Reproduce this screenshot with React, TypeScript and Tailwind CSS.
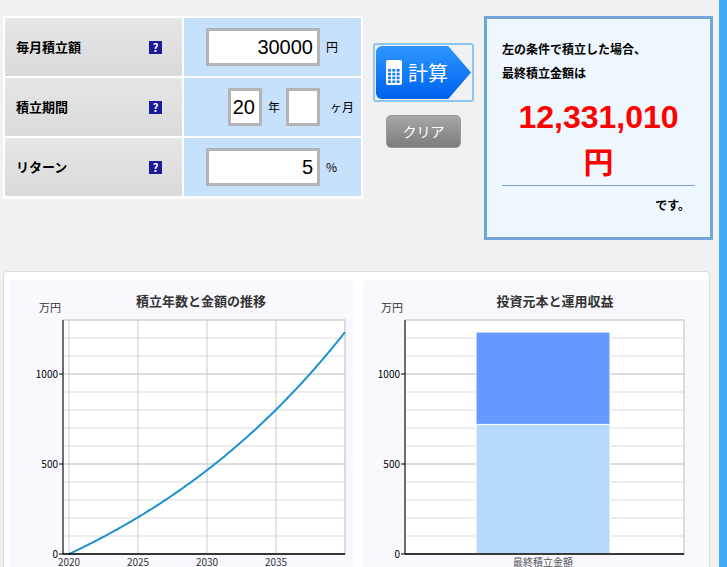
import React from "react";

const F = { fontFamily: '"Noto Sans CJK JP", "Liberation Sans", sans-serif' };

function Q() {
  return <span className="inline-flex h-[13px] w-[13px] items-center justify-center bg-[#1a1a9a] text-[11px] font-bold leading-none text-white">?</span>;
}

function Row({ label, children, last }: { label: string; children: React.ReactNode; last?: boolean }) {
  return (
    <div className={`flex h-[58px] gap-[2px] ${last ? "" : "mb-[2px]"}`}>
      <div className="flex w-[177px] items-center justify-between bg-gradient-to-b from-[#e6e6e6] to-[#dadada] pl-[11px] pr-[20px]">
        <span className="text-[13px] font-bold text-black">{label}</span>
        <Q />
      </div>
      <div className="flex w-[177px] items-center bg-[#c6e1fc]">{children}</div>
    </div>
  );
}

const Box = ({ w, v }: { w: string; v: string }) => (
  <div className={`${w} flex h-[38px] items-center justify-end overflow-hidden border-[3px] border-[#b4b4b4] bg-white pr-[4px] text-[20px] text-black`} style={{ fontFamily: '"Liberation Sans", sans-serif' }}>{v}</div>
);

function LineChart() {
  const W = 352 - 8, pts: string[] = [];
  const x0 = 62 - 8, y0 = 553 - 279;
  for (let m = 0; m <= 240; m++) {
    const r = 0.05 / 12;
    const fv = m === 0 ? 0 : 30000 * ((Math.pow(1 + r, m) - 1) / r);
    const x = 68 - 8 + (m / 12) * 13.8;
    const y = y0 - (fv / 10000) * 0.18;
    if (x <= 344 - 8) pts.push(`${x.toFixed(1)},${y.toFixed(1)}`);
  }
  return <Chart title="積立年数と金額の推移" w={W} extra={
    <>
      {[0, 5, 10, 15].map((k) => <line key={k} x1={60 + k * 13.8} x2={60 + k * 13.8} y1={40} y2={y0} stroke="#ccc" />)}
      <polyline points={pts.join(" ")} fill="none" stroke="#1a90d0" strokeWidth={2} />
      {["2020", "2025", "2030", "2035"].map((t, i) => <text key={t} x={60 + i * 69} y={y0 + 12} fontSize="10" textAnchor="middle" fill="#333">{t}</text>)}
    </>
  } plotW={344 - 62} x0={x0} y0={y0} />;
}

function Chart({ title, w, extra, plotW, x0, y0 }: any) {
  const lines = [];
  for (let v = 100; v <= 1300; v += 100) {
    const y = y0 - v * 0.18;
    lines.push(<line key={v} x1={x0} x2={x0 + plotW} y1={y} y2={y} stroke={v % 500 === 0 ? "#bbb" : "#ddd"} />);
  }
  return (
    <div className="rounded-[4px] bg-[#f8f8fe]" style={{ width: w }}>
      <svg width={w} height={288} style={F}>
        <text x={w / 2 + 20} y={26} fontSize="13" fontWeight="bold" textAnchor="middle" fill="#333">{title}</text>
        <text x={x0 - 24} y={32} fontSize="11" fill="#333">万円</text>
        <rect x={x0} y={40} width={plotW} height={y0 - 40} fill="#fff" stroke="#bbb" />
        {lines}
        {extra}
        <line x1={x0} x2={x0} y1={40} y2={y0} stroke="#000" />
        <line x1={x0} x2={x0 + plotW} y1={y0} y2={y0} stroke="#000" strokeWidth={1.5} />
        {[0, 500, 1000].map(v => <g key={v}><line x1={x0 - 4} x2={x0} y1={y0 - v * 0.18} y2={y0 - v * 0.18} stroke="#000" /><text x={x0 - 5} y={y0 - v * 0.18 + 4} fontSize="10" textAnchor="end" fill="#000">{v}</text></g>)}
      </svg>
    </div>
  );
}

function BarChart() {
  const x0 = 404 - 362, y0 = 553 - 279;
  return <Chart title="投資元本と運用収益" w={344} plotW={683 - 404} x0={x0} y0={y0} extra={
    <>
      <rect x={475 - 362} y={y0 - 720 * 0.18} width={134} height={720 * 0.18} fill="#b5d8fb" stroke="#fff" />
      <rect x={475 - 362} y={y0 - 1233 * 0.18} width={134} height={513 * 0.18} fill="#6699ff" stroke="#fff" />
      <text x={542 - 362} y={y0 + 12} fontSize="10" textAnchor="middle" fill="#555">最終積立金額</text>
    </>
  } />;
}

export default function App() {
  return (
    <div className="relative h-[567px] w-[727px] overflow-hidden bg-[#f1f1f1]" style={F}>
      <div className="absolute right-0 top-0 h-full w-[8px] bg-[#42aaf8]" />
      <div className="flex items-start pl-[3px] pt-[16px]">
        <div className="bg-white p-[2px] pb-[3px]">
          <Row label="毎月積立額">
            <div className="ml-[22px] flex items-center gap-[6px]"><Box w="w-[114px]" v="30000" /><span className="text-[12px]">円</span></div>
          </Row>
          <Row label="積立期間">
            <div className="ml-[44px] flex items-center gap-[6px]"><Box w="w-[34px]" v="20" /><span className="text-[12px]">年</span><Box w="w-[34px]" v="" /><span className="ml-[4px] text-[12px]">ヶ月</span></div>
          </Row>
          <Row label="リターン" last>
            <div className="ml-[22px] flex items-center gap-[6px]"><Box w="w-[114px]" v="5" /><span className="text-[12px]">%</span></div>
          </Row>
        </div>
        <div className="ml-[10px] mt-[27px] flex w-[101px] flex-col items-center">
          <div className="rounded-[3px] border-2 border-[#8cc4f2] p-[1px]">
            <div className="flex h-[53px] w-[95px] items-center gap-[6px] bg-gradient-to-b from-[#2e96ff] to-[#0060ee] pl-[10px] text-white" style={{ clipPath: "polygon(0 0, 76% 0, 100% 50%, 76% 100%, 0 100%)", borderRadius: 6 }}>
              <svg width="16" height="25" viewBox="0 0 16 25"><rect x="0" y="0" width="16" height="25" rx="2" fill="#fff" />{[0,1,2,3].map(r=>[0,1,2].map(c=><rect key={r+"-"+c} x={2+c*4.3} y={9+r*3.8} width="3" height="2.6" fill="#1c7cf4" />))}<rect x="2" y="2" width="12" height="5" fill="#fff" /></svg>
              <span className="text-[20px]">計算</span>
            </div>
          </div>
          <div className="mt-[13px] flex h-[33px] w-[75px] items-center justify-center rounded-[5px] border border-[#999] bg-gradient-to-b from-[#a8a8a8] to-[#7c7c7c] text-[14px] text-white">クリア</div>
        </div>
        <div className="ml-[10px] h-[224px] w-[229px] border-[3px] border-[#72a4dc] bg-[#eef6fe] px-[15px] pt-[18px]">
          <div className="text-[12px] font-bold leading-[24px] text-black">左の条件で積立した場合、<br />最終積立金額は</div>
          <div className="mt-[8px] text-center text-[32px] font-bold leading-[48px] text-[#ff0000]" style={{ fontFamily: '"Liberation Sans", sans-serif' }}>12,331,010</div>
          <div className="text-center text-[30px] font-bold leading-[38px] text-[#ff0000]">円</div>
          <div className="mt-[6px] border-t border-[#7aa0d0] pt-[10px] pr-[5px] text-right text-[12px] font-bold">です。</div>
        </div>
      </div>
      <div className="ml-[3px] mt-[31px] flex h-[310px] w-[707px] gap-[10px] rounded-[4px] border border-[#ddd] bg-white pl-[5px] pt-[8px]">
        <LineChart />
        <BarChart />
      </div>
    </div>
  );
}
